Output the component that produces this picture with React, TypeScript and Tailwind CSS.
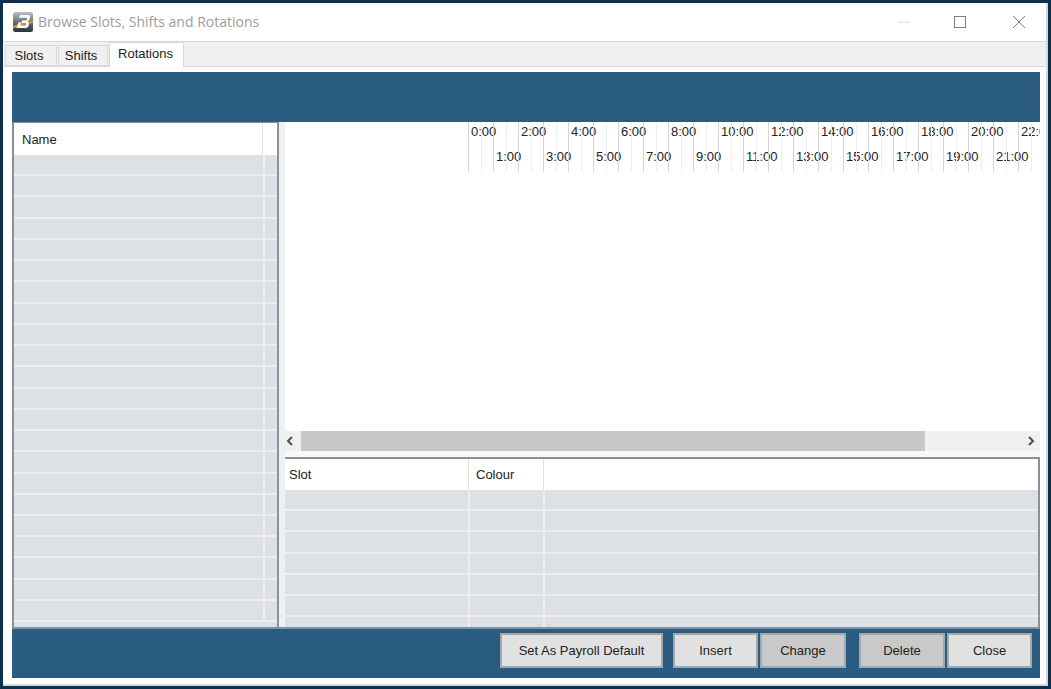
import React from "react";

const hours = Array.from({ length: 23 }, (_, i) => i);
const leftRows = Array.from({ length: 22 }, (_, i) => i);
const rightRows = Array.from({ length: 7 }, (_, i) => i);

function Logo() {
  return (
    <svg width="20" height="20" viewBox="0 0 20 20">
      <defs>
        <linearGradient id="lg" x1="0" y1="0" x2="0" y2="1">
          <stop offset="0" stopColor="#b9c0c5" />
          <stop offset="0.55" stopColor="#5f6a72" />
          <stop offset="1" stopColor="#27323b" />
        </linearGradient>
      </defs>
      <rect x="0" y="0" width="20" height="20" rx="2.5" fill="url(#lg)" />
      <path d="M0 14 C6 11 13 11 20 8 L20 11 C13 13 6 13.5 0 16.5 Z" fill="#e8871e" />
      <path
        d="M7 3 H15.5 Q17.6 3 17 6 Q16.6 8.4 14.6 9.2 Q16.4 10 15.8 12.8 Q15.2 16 12.4 16 H3.2 L4.4 13.6 L5.6 10.6 H8.2 L7.4 13.6 H11.6 Q12.9 13.6 13.1 12.2 Q13.2 11 12.2 11 H8.4 L9 8.4 H12.8 Q14 8.4 14.2 7 Q14.4 5.8 13.3 5.8 H6 Z"
        fill="#ffffff"
      />
    </svg>
  );
}

function Tab({ label, active, w }: { label: string; active?: boolean; w: string }) {
  return (
    <div
      className={
        active
          ? `${w} h-[25px] -mb-px self-end bg-white border-x border-t border-[#d9d9d9] flex items-start justify-center pt-[4px] pr-[2px] text-[#222]`
          : `${w} h-[21px] self-end bg-[#f0f0f0] border border-[#d9d9d9] flex items-center justify-center pr-[4px] text-[#222]`
      }
    >
      {label}
    </div>
  );
}

function Btn({ label, w, dim }: { label: string; w: string; dim?: boolean }) {
  return (
    <button
      className={`${w} h-[35px] border-2 border-[#a3a8ab] flex items-center justify-center text-[#222] ${dim ? "bg-[#c9c9c9]" : "bg-[#e1e1e1]"}`}
    >
      {label}
    </button>
  );
}

export default function App() {
  return (
    <div
      className="w-[1051px] h-[689px] bg-[#0c3150] p-[3px] overflow-hidden text-[13px] leading-none"
      style={{ fontFamily: '"Liberation Sans", Arial, sans-serif' }}
    >
      <div className="w-full h-full bg-white flex flex-col border-r-2 border-b-2 border-[#d4d8da]">
        {/* title bar */}
        <div className="h-[39px] shrink-0 flex items-center border-b border-[#d9d9d9] pl-[10px]">
          <Logo />
          <div
            className="ml-[5px] text-[14px] text-[#9c9c9c]"
            style={{ fontFamily: '"Open Sans", sans-serif' }}
          >
            Browse Slots, Shifts and Rotations
          </div>
          <div className="ml-auto flex items-center text-[#7d7d7d]">
            <svg width="12" height="12" viewBox="0 0 12 12" className="mr-[44px]">
              <path d="M0 6 H12" stroke="#dcdcdc" strokeWidth="1" />
            </svg>
            <svg width="12" height="12" viewBox="0 0 12 12" className="mr-[46px]">
              <rect x="0.5" y="0.5" width="11" height="11" fill="none" stroke="#7d7d7d" strokeWidth="1" />
            </svg>
            <svg width="14" height="14" viewBox="0 0 14 14" className="mr-[20px]">
              <path d="M1 1 L13 13 M13 1 L1 13" stroke="#7d7d7d" strokeWidth="1" />
            </svg>
          </div>
        </div>

        {/* tabs */}
        <div className="h-[25px] shrink-0 bg-[#f0f0f0] flex items-end pl-[2px] gap-px border-b border-[#d9d9d9]">
          <Tab label="Slots" w="w-[52px]" />
          <Tab label="Shifts" w="w-[50px]" />
          <Tab label="Rotations" w="w-[75px]" active />
        </div>

        {/* page */}
        <div className="flex-1 min-h-0 flex flex-col pl-[9px] pr-[6px] pt-[5px] pb-[6px]">
          <div className="h-[50px] shrink-0 bg-[#2a5b80]" />

          <div className="flex-1 min-h-0 flex">
            {/* left list */}
            <div className="w-[267px] shrink-0 border-x-2 border-t border-b-0 border-[#8a9099] bg-[#dde1e5] flex flex-col overflow-hidden">
              <div className="h-[32px] shrink-0 bg-white flex items-stretch">
                <div className="w-[249px] flex items-center pl-[8px] border-r border-[#e4e4e4] text-[#222]">Name</div>
              </div>
              {leftRows.map((r) => (
                <div key={r} className="h-[21.24px] shrink-0 border-b-2 border-[#eceef0] flex">
                  <div className="w-[251px] border-r-2 border-[#eceef0]" />
                </div>
              ))}
            </div>

            {/* splitter */}
            <div className="w-[6px] shrink-0 bg-[#f0f0f0]" />

            {/* right side */}
            <div className="flex-1 min-w-0 flex flex-col">
              <div className="flex-1 min-h-0 bg-white overflow-hidden pl-[183px] flex items-start">
                {hours.map((h) => (
                  <div key={h} className="w-[25px] h-[50px] shrink-0 flex">
                    <div className={`w-[13px] h-full border-l border-[#d5d5d5] text-[#222] whitespace-nowrap pl-[2px] ${h % 2 ? "pt-[28px]" : "pt-[3px]"}`}>
                      {h}:00
                    </div>
                    <div className="w-[12px] h-full border-l border-[#eeeeee]" />
                  </div>
                ))}
              </div>

              {/* scrollbar */}
              <div className="h-[20px] shrink-0 bg-[#f0f0f0] flex items-center">
                <div className="w-[16px] shrink-0 flex justify-start pl-[1px]">
                  <svg width="8" height="10" viewBox="0 0 8 10">
                    <path d="M6 1 L2 5 L6 9" fill="none" stroke="#505050" strokeWidth="2" />
                  </svg>
                </div>
                <div className="w-[624px] h-full bg-[#c8c8c8]" />
                <div className="flex-1 flex justify-end pr-[5px]">
                  <svg width="8" height="10" viewBox="0 0 8 10">
                    <path d="M2 1 L6 5 L2 9" fill="none" stroke="#505050" strokeWidth="2" />
                  </svg>
                </div>
              </div>
              <div className="h-[6px] shrink-0 bg-[#f8f8f8]" />

              {/* slot table */}
              <div className="h-[170px] shrink-0 border-t-2 border-r-2 border-[#8a9099] bg-[#dde1e5] flex flex-col overflow-hidden">
                <div className="h-[31px] shrink-0 bg-white flex text-[#222]">
                  <div className="w-[184px] flex items-center pl-[4px] border-r border-[#e0e0e0]">Slot</div>
                  <div className="w-[75px] flex items-center pl-[7px] border-r border-[#e0e0e0]">Colour</div>
                </div>
                {rightRows.map((r) => (
                  <div key={r} className="h-[21.2px] shrink-0 border-b-2 border-[#eceef0] flex">
                    <div className="w-[185px] border-r-2 border-[#eceef0]" />
                    <div className="w-[75px] border-r-2 border-[#eceef0]" />
                  </div>
                ))}
              </div>
            </div>
          </div>

          {/* bottom bar */}
          <div className="h-[51px] shrink-0 bg-[#2a5b80] border-t-2 border-[#8a9099] flex items-start pl-[488px] pt-[4px]">
            <Btn label="Set As Payroll Default" w="w-[163px]" />
            <div className="w-[10px]" />
            <Btn label="Insert" w="w-[85px]" />
            <div className="w-[2px]" />
            <Btn label="Change" w="w-[86px]" dim />
            <div className="w-[13px]" />
            <Btn label="Delete" w="w-[86px]" dim />
            <div className="w-[2px]" />
            <Btn label="Close" w="w-[85px]" />
          </div>
        </div>
      </div>
    </div>
  );
}
